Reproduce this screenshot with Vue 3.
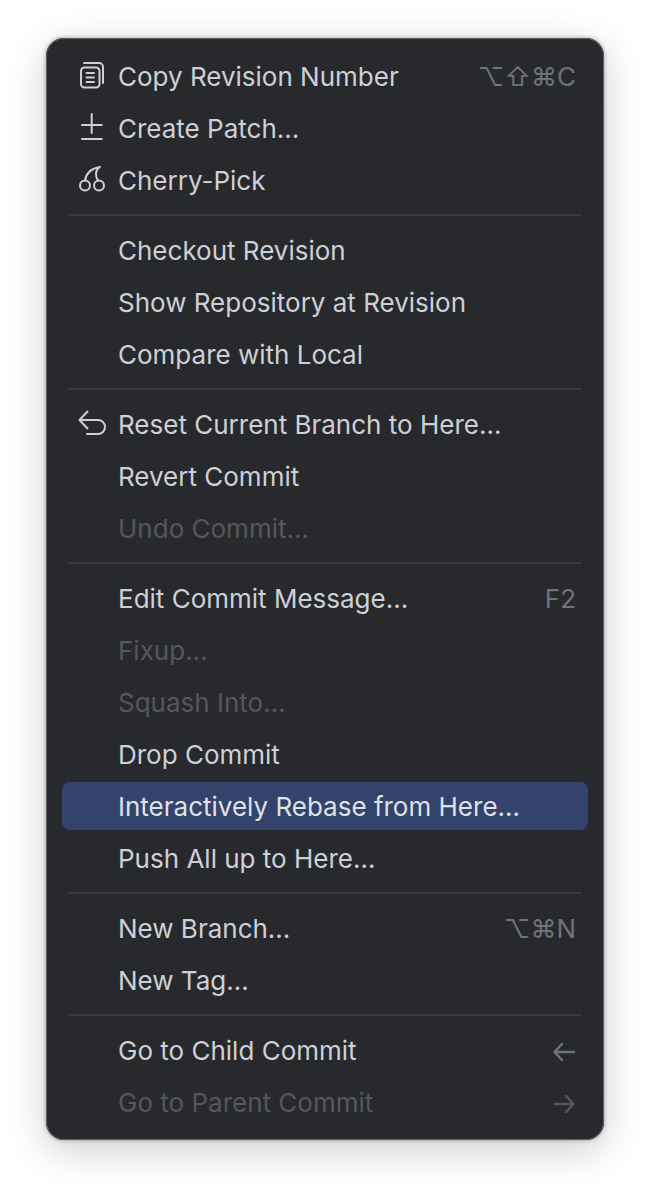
<template>
  <div class="page">
    <div class="menu">
      <template v-for="(group, g) in groups" :key="g">
        <div v-if="g > 0" class="separator"></div>
        <div
          v-for="item in group"
          :key="item.label"
          :class="['row', { disabled: item.disabled, selected: item.selected }]"
        >
          <span class="icon">
            <svg v-if="item.icon === 'copy'" width="28" height="26" viewBox="0 0 28 26" fill="none">
              <rect x="3" y="4.500" width="18.500" height="20" rx="3.500" />
              <path d="M6 0h15a4 4 0 0 1 4 4v16" />
              <path d="M8.500 10h7.500M8.500 14.500h7.500M8.500 19h7.500" />
            </svg>
            <svg v-else-if="item.icon === 'patch'" width="28" height="26" viewBox="0 0 28 26" fill="none">
              <path d="M13.700 -1v19M4 10h19.700M4 24h19.700" />
            </svg>
            <svg v-else-if="item.icon === 'cherry'" width="28" height="26" viewBox="0 0 28 26" fill="none">
              <circle cx="7" cy="18.500" r="5" />
              <circle cx="21" cy="18.500" r="5" />
              <path d="M7 13.500C8 7 13 1.500 22 0 17 3 17 9 20 13.500" />
            </svg>
            <svg v-else-if="item.icon === 'reset'" width="28" height="26" viewBox="0 0 28 26" fill="none">
              <path d="M9.500 0.500 1.500 9l8 8.500M2 9h18a7 7 0 0 1 0 14H9" />
            </svg>
          </span>
          <span class="label">{{ item.label }}</span>
          <span v-if="item.shortcut" class="shortcut">{{ item.shortcut }}</span>
          <svg v-if="item.arrow === 'left'" class="arrow" width="22" height="20" viewBox="0 0 22 20" fill="none">
            <path d="M9 2 1.500 10 9 18M2 10H21" />
          </svg>
          <svg v-if="item.arrow === 'right'" class="arrow" width="22" height="20" viewBox="0 0 22 20" fill="none">
            <path d="M13 2l7.500 8-7.500 8M20 10H2" />
          </svg>
        </div>
      </template>
    </div>
  </div>
</template>

<script setup>
const groups = [
  [
    { label: 'Copy Revision Number', icon: 'copy', shortcut: '⌥⇧⌘C' },
    { label: 'Create Patch...', icon: 'patch' },
    { label: 'Cherry-Pick', icon: 'cherry' }
  ],
  [
    { label: 'Checkout Revision' },
    { label: 'Show Repository at Revision' },
    { label: 'Compare with Local' }
  ],
  [
    { label: 'Reset Current Branch to Here...', icon: 'reset' },
    { label: 'Revert Commit' },
    { label: 'Undo Commit...', disabled: true }
  ],
  [
    { label: 'Edit Commit Message...', shortcut: 'F2' },
    { label: 'Fixup...', disabled: true },
    { label: 'Squash Into...', disabled: true },
    { label: 'Drop Commit' },
    { label: 'Interactively Rebase from Here...', selected: true },
    { label: 'Push All up to Here...' }
  ],
  [
    { label: 'New Branch...', shortcut: '⌥⌘N' },
    { label: 'New Tag...' }
  ],
  [
    { label: 'Go to Child Commit', arrow: 'left' },
    { label: 'Go to Parent Commit', arrow: 'right', disabled: true }
  ]
];
</script>

<style>
html, body {
  background: #fff;
}
</style>

<style scoped>
.page {
  width: 650px;
  height: 1194px;
  padding: 38px 46px 0;
  box-sizing: border-box;
}

.menu {
  width: 558px;
  height: 1102px;
  box-sizing: border-box;
  padding: 12px 16px;
  background: #28292d;
  border-radius: 18px;
  box-shadow: inset 0 0 0 1px #5f6063, 0 10px 40px rgba(0, 0, 0, 0.2), 0 0 4px rgba(0, 0, 0, 0.35);
  font-family: Inter, "Liberation Sans", sans-serif;
  font-size: 26px;
  color: #ced0d6;
}

.row {
  height: 52px;
  display: flex;
  align-items: center;
  padding: 0 16px;
  border-radius: 8px;
}

.selected {
  height: 48px;
  margin: 2px 0;
  background: #33436c;
  color: #dfe1e5;
}

.disabled {
  color: #55575c;
}

.icon {
  width: 40px;
  height: 26px;
  flex: none;
}

.icon svg,
.arrow {
  display: block;
  overflow: visible;
  stroke: #ced0d6;
  stroke-width: 2;
  stroke-linecap: round;
  stroke-linejoin: round;
}

.label {
  flex: 1;
  white-space: nowrap;
}

.shortcut {
  margin-right: -4px;
  color: #6f737a;
  font-family: Inter, "DejaVu Sans", sans-serif;
  white-space: nowrap;
}

.arrow {
  margin: 3px -3px 0 0;
  stroke: #6f737a;
  stroke-width: 2.5;
}

.disabled .arrow {
  stroke: #55575c;
}

.separator {
  height: 2px;
  margin: 8px 6px;
  background: #37383c;
}
</style>
